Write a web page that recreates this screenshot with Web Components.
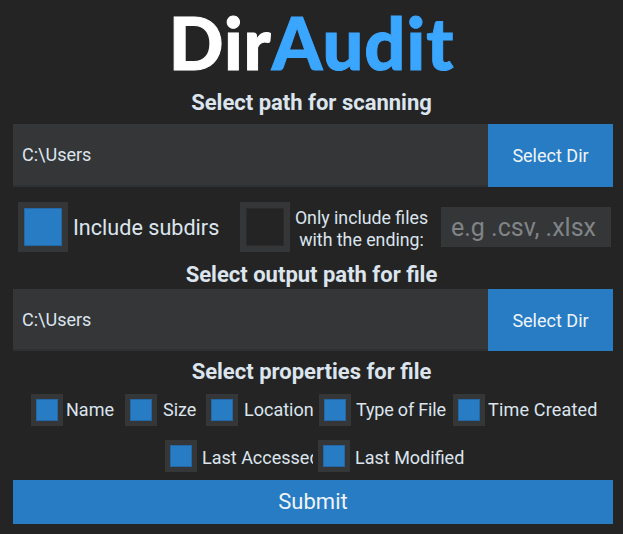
<!DOCTYPE html>
<html>
<head>
<meta charset="utf-8">
<title>DirAudit</title>
<style>
  html, body { margin: 0; background: #242424; }
  body { width: 623px; height: 534px; overflow: hidden; font-family: Roboto, "Liberation Sans", sans-serif; }
</style>
</head>
<body>
<dir-app></dir-app>
<script>
// Section heading
class SectionTitle extends HTMLElement {
  constructor() {
    super();
    this.attachShadow({ mode: 'open' });
    this.shadowRoot.innerHTML = `
      <style>
        :host { display: block; text-align: center; font: 700 22px/24px Roboto, sans-serif; color: #dce4ee; }
      </style>
      <slot></slot>`;
  }
}

// Path entry + blue button
class PathRow extends HTMLElement {
  constructor() {
    super();
    this.attachShadow({ mode: 'open' });
    this.shadowRoot.innerHTML = `
      <style>
        :host { display: flex; margin: 0 10px 0 13px; height: var(--row-h, 63px); }
        .entry { flex: 1; background: #343638; border-bottom: 2px solid #2e3032; box-sizing: border-box;
          display: flex; align-items: center; padding-left: 9px; font-size: 18px; color: #dce4ee; }
        .btn { width: 125px; background: #277cc4; display: flex; align-items: center; justify-content: center;
          font-size: 18px; color: #f0f4f8; }
      </style>
      <div class="entry">C:\\Users</div>
      <div class="btn">Select Dir</div>`;
  }
}

// CustomTkinter style checkbox: grey frame with blue fill
class CheckBox extends HTMLElement {
  constructor() {
    super();
    this.attachShadow({ mode: 'open' });
    const off = this.hasAttribute('off');
    const size = this.getAttribute('size') || 32;
    const border = this.getAttribute('border') || 5;
    this.shadowRoot.innerHTML = `
      <style>
        :host { display: block; flex: none; width: ${size}px; height: ${size}px; box-sizing: border-box;
          border: ${border}px solid #343638; }
        .fill { width: 100%; height: 100%; box-sizing: border-box; border: 1px solid ${off ? '#2b2b2b' : '#2268a6'};
          background: ${off ? '#242424' : '#277cc4'}; }
      </style>
      <div class="fill"></div>`;
  }
}

// Small checkbox with a label box, label may clip
class PropItem extends HTMLElement {
  constructor() {
    super();
    this.attachShadow({ mode: 'open' });
    const gap = this.getAttribute('gap') || 3;
    const width = this.getAttribute('width');
    const after = this.getAttribute('after') || 0;
    const track = this.getAttribute('track') || 0;
    this.shadowRoot.innerHTML = `
      <style>
        :host { display: flex; align-items: center; height: 32px; margin-right: ${after}px; }
        .label { margin-left: ${gap}px; width: ${width}px; white-space: nowrap; overflow: hidden;
          padding-top: var(--label-pad, 0); font-size: 18px; line-height: 24px; letter-spacing: ${track}px; color: #dce4ee; }
      </style>
      <check-box></check-box>
      <div class="label"><slot></slot></div>`;
  }
}

// Whole window
class DirApp extends HTMLElement {
  constructor() {
    super();
    this.attachShadow({ mode: 'open' });
    this.shadowRoot.innerHTML = `
      <style>
        :host { display: block; width: 623px; height: 534px; }
        .logo { height: 91px; display: flex; justify-content: center; box-sizing: border-box;
          font: 900 72px/84px Lato, sans-serif; letter-spacing: 1px; color: #fff; -webkit-text-stroke: 1px currentColor; }
        .logo span { color: #3aa6ff; }
        .title1 { margin-bottom: 9px; }
        .title2 { margin-bottom: 2px; }
        .title3 { margin-top: 9px; }
        .opts { display: flex; height: 50px; margin: 15px 0 11px 18px; align-items: center; }
        .big { font-size: 21.6px; color: #dce4ee; margin-left: 5px; width: 167px; white-space: nowrap; }
        .only { width: 137px; margin: 0 11px 0 3px; padding-top: 3px; font-size: 17.75px; line-height: 22px; text-align: center; color: #dce4ee; }
        .ext { width: 170px; height: 40px; background: #343638; box-sizing: border-box;
          padding-left: 10px; font-size: 25px; line-height: 42px; color: #808486; white-space: nowrap; }
        .props { display: flex; padding-left: 31px; margin-top: 10px; }
        .props.two { padding-left: 165px; margin-top: 14px; --label-pad: 4px; }
        .submit { margin: 8px 10px 0 13px; height: 44px; background: #277cc4; color: #f0f4f8;
          font-size: 22px; line-height: 44px; text-align: center; }
        path-row.second { --row-h: 62px; }
      </style>
      <div class="logo">Dir<span>Audit</span></div>
      <section-title class="title1">Select path for scanning</section-title>
      <path-row></path-row>
      <div class="opts">
        <check-box size="50" border="6"></check-box>
        <div class="big">Include subdirs</div>
        <check-box size="50" border="6" off></check-box>
        <div class="only">Only include files<br>with the ending:</div>
        <div class="ext">e.g .csv, .xlsx</div>
      </div>
      <section-title class="title2">Select output path for file</section-title>
      <path-row class="second"></path-row>
      <section-title class="title3">Select properties for file</section-title>
      <div class="props">
        <prop-item width="59">Name</prop-item>
        <prop-item gap="6" width="43">Size</prop-item>
        <prop-item gap="6" width="75">Location</prop-item>
        <prop-item gap="5" width="97" track="-0.18">Type of File</prop-item>
        <prop-item width="112" track="0.18">Time Created</prop-item>
      </div>
      <div class="props two">
        <prop-item gap="5" width="111" after="5">Last Accessed</prop-item>
        <prop-item gap="5" width="112">Last Modified</prop-item>
      </div>
      <div class="submit">Submit</div>`;
  }
}

customElements.define('section-title', SectionTitle);
customElements.define('path-row', PathRow);
customElements.define('check-box', CheckBox);
customElements.define('prop-item', PropItem);
customElements.define('dir-app', DirApp);
</script>
</body>
</html>
